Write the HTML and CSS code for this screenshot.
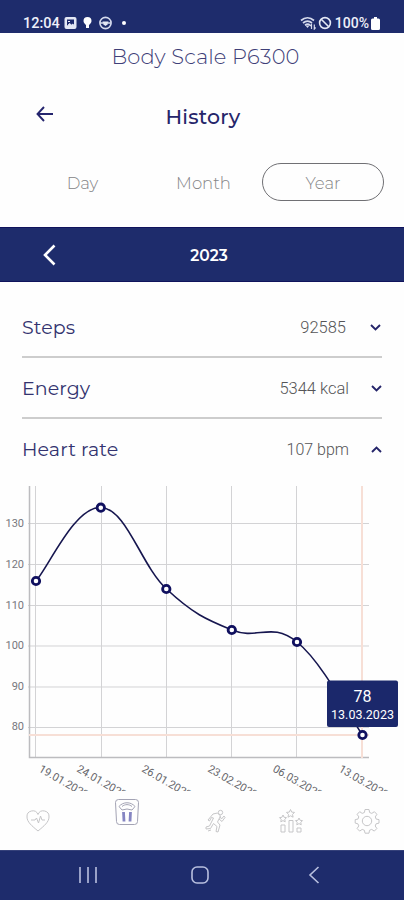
FILE: index.html
```html
<!DOCTYPE html>
<html lang="en">
<head>
    <meta charset="UTF-8">
    <meta name="viewport" content="width=device-width, initial-scale=1.0">
    <title>Body Scale P6300</title>
    <link rel="stylesheet" href="styles.css">
</head>
<body>
    <div class="status-bar">
        <span class="clock">12:04</span>
        <svg class="status-icons" width="66" height="14" viewBox="0 0 66 14">
            <rect x="0.5" y="1" width="12" height="12" rx="2" fill="#e4e8f5"/>
            <path d="M3 3.500h7v7H3z" fill="#1e2b6c"/>
            <path d="M3 10.500l2.500-3 2 1.500 1.500-1 1 2.500zM4 5.500h2" fill="#e4e8f5" stroke="#e4e8f5"/>
            <path d="M23.500 1a4 4 0 0 1 4 4c0 1.800-1.500 3-2.500 4v3h-3V9c-1-1-2.500-2.200-2.500-4a4 4 0 0 1 4-4z" fill="#fff"/>
            <circle cx="41.500" cy="7" r="5.600" fill="none" stroke="#d5daed" stroke-width="1.600"/>
            <path d="M36 7h3M44 7h3" stroke="#d5daed" stroke-width="1.500"/>
            <path d="M38.500 5.500h6l-1 3-2 1.500-2-1.500z" fill="#e4e8f5"/>
            <circle cx="60" cy="7" r="2" fill="#fff"/>
        </svg>
        <svg class="status-icons status-right" width="32" height="14" viewBox="0 0 32 14">
            <path d="M1 4.500c4-3.500 9-3.500 13 0M3 7c3-2.500 6-2.500 9 0M5 9.300c2-1.500 3.500-1.500 5 0" fill="none" stroke="#d5daed" stroke-width="1.700"/>
            <path d="M7.500 12l-2-2.500h4z" fill="#d5daed"/>
            <path d="M11.500 13V8.500l-1.300 1.500M14.300 8.500V13l1.300-1.500" fill="none" stroke="#d5daed" stroke-width="1.200"/>
            <circle cx="25" cy="7" r="5.400" fill="none" stroke="#e4e8f5" stroke-width="1.600"/>
            <path d="M21.500 3.500l7 7" stroke="#e4e8f5" stroke-width="1.600"/>
        </svg>
        <span class="battery-text">100%</span>
        <svg width="9" height="13" viewBox="0 0 9 13">
            <path d="M3 0h3v1.500h1.500a1.500 1.500 0 0 1 1.500 1.500v8.500a1.500 1.500 0 0 1-1.500 1.500h-6A1.500 1.500 0 0 1 0 11.500V3a1.500 1.500 0 0 1 1.500-1.500H3z" fill="#fff"/>
        </svg>
    </div>

    <h1 class="device-name">Body Scale P6300</h1>

    <div class="page-header">
        <svg class="back" width="18" height="16" viewBox="0 0 18 16">
            <path d="M8 1L1.500 8 8 15M1.500 8H17" fill="none" stroke="#25256e" stroke-width="1.900"/>
        </svg>
        <h2>History</h2>
    </div>

    <div class="tabs">
        <div class="tab">Day</div>
        <div class="tab">Month</div>
        <div class="tab active">Year</div>
    </div>

    <div class="year-bar">
        <svg class="prev" width="15" height="22" viewBox="0 0 15 22">
            <path d="M12.500 1.500L3 11l9.500 9.500" fill="none" stroke="#fff" stroke-width="2.600"/>
        </svg>
        <span>2023</span>
    </div>

    <div class="metrics">
        <div class="metric">
            <span class="metric-name">Steps</span>
            <span class="metric-value value-steps">92585</span>
            <svg class="chevron chevron-steps" width="11" height="7" viewBox="0 0 11 7"><path d="M1 1l4.500 4.500L10 1"/></svg>
        </div>
        <div class="metric">
            <span class="metric-name">Energy</span>
            <span class="metric-value">5344 kcal</span>
            <svg class="chevron" width="11" height="7" viewBox="0 0 11 7"><path d="M1 1l4.500 4.500L10 1"/></svg>
        </div>
        <div class="metric open">
            <span class="metric-name">Heart rate</span>
            <span class="metric-value value-heart">107 bpm</span>
            <svg class="chevron" width="11" height="7" viewBox="0 0 11 7"><path d="M1 6l4.500-4.500L10 6"/></svg>
        </div>
    </div>

    <svg class="chart" width="404" height="311" viewBox="0 480 404 311">
        <!-- grid -->
        <g class="grid">
            <path d="M28 523.500H369M28 564.500H369M28 605.500H369M28 646H369M28 687H369M28 727.500H369"/>
            <path d="M35.500 486V758M101.500 486V758M166.500 486V758M231.500 486V758M296.500 486V758"/>
        </g>
        <path class="axis" d="M29.500 486V757.500H369"/>
        <path class="highlight" d="M29 735H369M362 486V758"/>

        <g class="y-labels">
            <text x="24" y="527">130</text>
            <text x="24" y="568">120</text>
            <text x="24" y="609">110</text>
            <text x="24" y="649">100</text>
            <text x="24" y="690">90</text>
            <text x="24" y="730">80</text>
        </g>
        <g class="x-labels">
            <text transform="translate(38 771) rotate(30)">19.01.2023</text>
            <text transform="translate(76 771) rotate(30)">24.01.2023</text>
            <text transform="translate(141 771) rotate(30)">26.01.2023</text>
            <text transform="translate(207 771) rotate(30)">23.02.2023</text>
            <text transform="translate(272 771) rotate(30)">06.03.2023</text>
            <text transform="translate(338 771) rotate(30)">13.03.2023</text>
        </g>

        <path class="line" d="M36 581C49 566.300 75 505.900 101 507.500C127 509.100 140.300 564.500 166.500 589C192.700 613.500 206 619.400 232 630C258 640.600 271 621 297 642C323 663 349.500 716.400 362.500 735"/>
        <g class="points">
            <circle cx="36" cy="581" r="3.700"/>
            <circle cx="100.800" cy="507.700" r="3.700"/>
            <circle cx="166.300" cy="589" r="3.700"/>
            <circle cx="231.800" cy="630" r="3.700"/>
            <circle cx="297" cy="642" r="3.700"/>
            <circle cx="362.500" cy="735" r="3.700"/>
        </g>

        <!-- marker -->
        <rect x="327" y="680.500" width="71" height="46.500" rx="2" fill="#1b286b"/>
        <text class="marker-value" x="362.500" y="701.500">78</text>
        <text class="marker-date" x="362.500" y="719" textLength="63">13.03.2023</text>
    </svg>

    <div class="bottom-nav">
        <svg class="nav-icon" width="26" height="26" viewBox="0 0 26 26">
            <path d="M13 23C7 18 2 14 2 9a5.700 5.700 0 0 1 11-2.500A5.700 5.700 0 0 1 24 9c0 5-5 9-11 14z"/>
            <path d="M6 12h4l1.500-2 2 5 2-7 1.500 4h3"/>
        </svg>
        <svg class="nav-icon selected" width="26" height="28" viewBox="0 0 26 28">
            <path d="M4.500 1.500h17a3 3 0 0 1 3 3l-1 19a3 3 0 0 1-3 3h-15a3 3 0 0 1-3-3l-1-19a3 3 0 0 1 3-3z"/>
            <path d="M5 8.500c4-5 12-5 16 0l-3 3.500q-5-2-10 0zM8 8.500c3-2.500 7-2.500 10 0"/>
            <path class="foot" d="M9.500 14l.5 9.500M16.500 14l-.5 9.500"/>
        </svg>
        <svg class="nav-icon" width="26" height="26" viewBox="0 0 26 26">
            <circle cx="17.500" cy="4.500" r="2.200"/>
            <path d="M10 6l4.500-1 3 3-3 6 2.500 3-2 7-2-.5 1-5-3.500-3-3 5-4.500.5V19l3.500-1 4-8-2-.5-2 3.500-1.500-1zM17 8.500l1.500 2.500L21 8l1 1.500-3 4-3-2.500M5 23l3-1"/>
        </svg>
        <svg class="nav-icon" width="26" height="26" viewBox="0 0 26 26">
            <path d="M12.500 1.500l1.200 2.600 2.800.3-2 2 .6 2.800-2.600-1.400-2.500 1.400.5-2.800-2-2 2.800-.3zM5 7l1.100 2.300 2.400.3-1.700 1.700.4 2.500L5 12.600l-2.200 1.200.4-2.500-1.700-1.700 2.400-.3zM21 10l1.100 2.300 2.400.3-1.700 1.700.4 2.500-2.200-1.200-2.200 1.200.4-2.500-1.700-1.700 2.400-.3z"/>
            <path d="M3 24v-7h4v7zM11 24V12.500h4V24zM19 24v-4h4v4z"/>
        </svg>
        <svg class="nav-icon" width="26" height="26" viewBox="0 0 26 26">
            <path d="M11 1.500h4l.6 3 2.200.9L20.400 3.700l2.500 2.600-1.600 2.600.9 2.200 2.800.5v3.500l-2.900.7-.9 2.200 1.700 2.500-2.600 2.600-2.600-1.700-2.200.9-.5 2.900h-4l-.6-2.900-2.200-.9-2.600 1.700-2.500-2.600 1.700-2.600-.9-2.100-2.700-.7v-3.500l2.700-.5.9-2.200-1.700-2.600 2.600-2.600 2.500 1.700 2.200-.9z"/>
            <circle cx="13" cy="13" r="4.700"/>
        </svg>
    </div>

    <div class="system-nav">
        <svg width="18" height="18" viewBox="0 0 18 18"><path d="M1 1v16M9 1v16M17 1v16"/></svg>
        <svg width="18" height="18" viewBox="0 0 18 18"><rect x="1" y="1" width="16" height="16" rx="5"/></svg>
        <svg width="12" height="18" viewBox="0 0 12 18"><path d="M10.500 1L2 9l8.500 8"/></svg>
    </div>
</body>
</html>
```
FILE: styles.css
```css
* {
    box-sizing: border-box;
}
body {
    margin: 0;
    width: 404px;
    height: 900px;
    overflow: hidden;
    display: flex;
    flex-direction: column;
    background-color: #fefefe;
    color: #25256a;
    font-family: Montserrat, Inter, sans-serif;
}
body > * {
    flex-shrink: 0;
}
.status-bar {
    display: flex;
    align-items: center;
    height: 33px;
    padding: 13px 24px 0 23px;
    background-color: #1e2c6c;
    color: #eef0fa;
    font-family: Roboto, sans-serif;
    font-size: 14.500px;
    font-weight: 500;
}
.clock {
    width: 41px;
}
.status-right {
    margin-left: auto;
}
.battery-text {
    margin: 0 2px 0 3px;
    font-size: 14px;
}
.device-name {
    margin: 0;
    height: 48px;
    padding-left: 7px;
    line-height: 48px;
    font-size: 21px;
    font-weight: 300;
    letter-spacing: 0.1px;
    text-align: center;
    color: #3f3f78;
}
.page-header {
    display: grid;
    grid-template-columns: 74px 1fr 74px;
    align-items: center;
    height: 70px;
}
.back {
    margin: -4px 0 0 36px;
}
.page-header h2 {
    margin: 0;
    padding-left: 2px;
    font-size: 20.500px;
    font-weight: 500;
    letter-spacing: 0.2px;
    text-align: center;
}
.tabs {
    display: grid;
    grid-template-columns: repeat(3, 121px);
    height: 76px;
    padding: 12px 0 0 22px;
}
.tab {
    height: 38px;
    line-height: 40px;
    font-size: 16.500px;
    font-weight: 300;
    text-align: center;
    color: #858587;
}
.tab.active {
    margin-left: -2px;
    width: 122px;
    line-height: 38px;
    border: 1px solid #707074;
    border-radius: 19px;
}
.year-bar {
    display: grid;
    grid-template-columns: 74px 1fr 60px;
    align-items: center;
    height: 55px;
    padding-top: 1px;
    border-top: 1px solid #10135c;
    border-bottom: 1px solid #10135c;
    background-color: #1e2c6c;
    color: #fff;
    font-size: 15.500px;
    font-weight: 600;
    text-align: center;
}
.prev {
    margin: -1px 0 0 42px;
}
.metrics {
    padding: 15px 22px 0;
    height: 198px;
}
.metric {
    display: flex;
    align-items: center;
    height: 61px;
    padding-top: 1px;
    border-bottom: 2px solid #cdcdcd;
}
.metric.open {
    padding-top: 0;
    border-bottom: none;
}
.metric-name {
    font-size: 19px;
    letter-spacing: 0.1px;
    color: #33336f;
}
.metric-value {
    margin-left: auto;
    margin-right: 22px;
    font-family: Roboto, sans-serif;
    font-size: 16.500px;
    font-weight: 300;
    color: #555557;
}
.value-steps {
    margin-right: 24px;
}
.value-heart {
    font-size: 16px;
}
.chevron path {
    fill: none;
    stroke: #25256a;
    stroke-width: 1.900;
}
.chevron-steps {
    margin-right: 1px;
}
.chart {
    display: block;
    font-family: Roboto, sans-serif;
}
.grid path {
    stroke: #d3d3d5;
    stroke-width: 1;
}
.axis {
    fill: none;
    stroke: #bcbcbf;
    stroke-width: 1.500;
}
.highlight {
    stroke: #f7dfd6;
    stroke-width: 2;
}
.y-labels text {
    font-size: 11px;
    fill: #77777d;
    text-anchor: end;
}
.x-labels text {
    font-size: 11px;
    fill: #66666c;
}
.line {
    fill: none;
    stroke: #16164f;
    stroke-width: 1.600;
}
.points circle {
    fill: #fff;
    stroke: #10105f;
    stroke-width: 2.800;
}
.marker-value {
    font-size: 16px;
    fill: #fff;
    text-anchor: middle;
}
.marker-date {
    font-size: 12.500px;
    fill: #fff;
    text-anchor: middle;
}
.bottom-nav {
    display: grid;
    grid-template-columns: 89px 89px 75px 76px 26px;
    align-items: center;
    height: 59px;
    padding-left: 25px;
}
.nav-icon {
    fill: none;
    stroke: #c6c6c8;
    stroke-width: 1;
}
.selected {
    margin-top: -17px;
    stroke: #a3a3b4;
}
.foot {
    stroke: #8585c2;
    stroke-width: 2.800;
}
.system-nav {
    display: grid;
    grid-template-columns: 112px 117px 12px;
    align-items: center;
    height: 50px;
    padding: 0 0 2px 79px;
    background-color: #1e2c6c;
    border-top: 1px solid #35417a;
}
.system-nav svg {
    fill: none;
    stroke: #b9c0df;
    stroke-width: 1.600;
}
```
